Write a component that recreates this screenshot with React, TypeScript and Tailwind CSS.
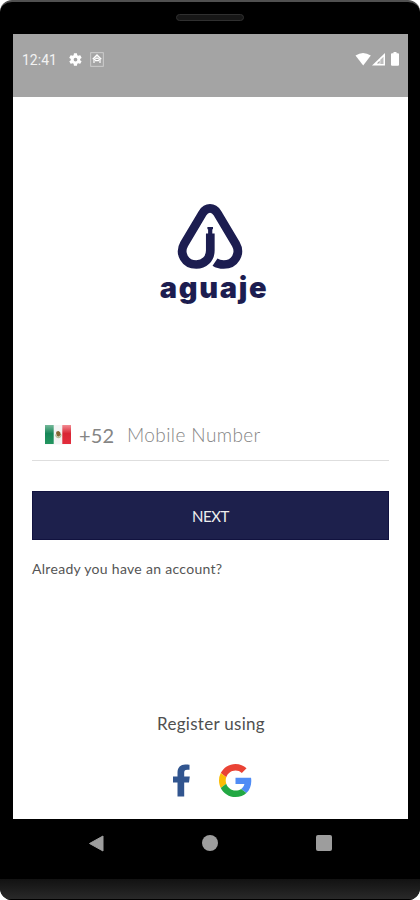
import React from 'react';

const StatusBar: React.FC = () => (
  <header className="flex h-[63px] items-start justify-between bg-[#a4a4a4] pl-[9px] pr-[7px] pt-[16px] text-white">
    <div className="flex h-[19px] items-center">
      <span className="w-[46px] whitespace-nowrap font-['Roboto',sans-serif] text-[14px] leading-none text-[#f2f2f2]">12:41</span>
      <svg className="h-[15px] w-[15px]" viewBox="0 0 24 24" fill="currentColor">
        <path d="M19.4 13a7.5 7.5 0 0 0 0-2l2.1-1.6a.5.5 0 0 0 .1-.7l-2-3.4a.5.5 0 0 0-.6-.2l-2.5 1a7.3 7.3 0 0 0-1.7-1l-.4-2.6a.5.5 0 0 0-.5-.5h-4a.5.5 0 0 0-.5.5L9 5.1a7.3 7.3 0 0 0-1.7 1l-2.5-1a.5.5 0 0 0-.6.2l-2 3.4a.5.5 0 0 0 .1.7L4.5 11a7.5 7.5 0 0 0 0 2l-2.2 1.6a.5.5 0 0 0-.1.7l2 3.4c.1.2.4.3.6.2l2.5-1a7.3 7.3 0 0 0 1.7 1l.4 2.6c0 .3.2.5.5.5h4c.3 0 .5-.2.5-.5l.4-2.6a7.3 7.3 0 0 0 1.7-1l2.5 1c.2.1.5 0 .6-.2l2-3.4a.5.5 0 0 0-.1-.7zM12 15a3 3 0 1 1 0-6 3 3 0 0 1 0 6z" />
      </svg>
      <svg className="ml-[7px] h-[15px] w-[14px]" viewBox="0 0 14 15" fill="none" stroke="currentColor">
        <rect x="0.7" y="0.7" width="12.6" height="13.6" strokeOpacity="0.5" strokeWidth="0.9" />
        <path d="M2.8 7.3 7 3l4.2 4.3" strokeWidth="1.5" />
        <path d="M4 11V7.8L7 6l3 1.8V11" strokeWidth="1.2" />
        <path d="M5 8.7h4" strokeWidth="1.2" />
      </svg>
    </div>
    <svg className="mt-[2px] h-[15px] w-[46px]" viewBox="0 0 46 15" fill="currentColor">
      <path d="M0.5 3.5Q8 -1.5 15.8 3.5L8.2 13.5z" />
      <path d="M17 13.5 30 1v12.5z" />
      <path d="M21.8 11.6 24.6 8.7v2.9z" fill="#a4a4a4" />
      <path d="M25.3 7.8 28.5 4.7V12h-3.2z" fill="#bebebe" />
      <path d="M38.5 1.2V0h3v1.2H43q1 0 1 1v10.5q0 1-1 1h-6q-1 0-1-1V2.2q0-1 1-1z" />
    </svg>
  </header>
);

const Logo: React.FC = () => (
  <div className="flex flex-col items-center text-[#1c1d50]">
    <svg className="h-[67px] w-[68px]" viewBox="25.5 8 68 67" fill="none" stroke="currentColor">
      <path
        d="M59.8 38.5V55.5C59.8 64 53.5 69.5 45.8 69.5C34.5 69.5 28.3 58.5 33.7 49L52 18.2Q55 13.4 59.5 13.4Q64 13.4 67 18.2L85.3 49C90.7 58.5 84.5 69.5 73.2 69.5Q68 69.5 64.5 67.1"
        strokeWidth="8.7"
      />
      <path d="M59.7 39.5v-6" strokeWidth="4.2" />
      <path d="M56.9 33.2h5.6" strokeWidth="2.2" />
    </svg>
    <h1 className="ml-[8px] whitespace-nowrap font-['Inter',sans-serif] text-[29px] font-black leading-[36px] tracking-[1.7px]">
      aguaje
    </h1>
  </div>
);

const MexicoFlag: React.FC = () => (
  <svg className="h-[20px] w-[26px]" viewBox="0 0 26 20">
    <defs>
      <linearGradient id="green" x2="0" y2="1">
        <stop offset="0" stopColor="#75b89a" />
        <stop offset="0.45" stopColor="#168657" />
        <stop offset="1" stopColor="#23955f" />
      </linearGradient>
      <linearGradient id="red" x2="0" y2="1">
        <stop offset="0" stopColor="#f28b92" />
        <stop offset="0.45" stopColor="#d92534" />
        <stop offset="1" stopColor="#e22d3c" />
      </linearGradient>
    </defs>
    <path d="M0 0h26v19.5H0z" fill="#f4f4f4" />
    <path d="M0 0h8.7v19H0z" fill="url(#green)" />
    <path d="M17.3 0H26v19h-8.7z" fill="url(#red)" />
    <path d="M10.5 9.5q.5 3.2 3 3.2 2.2 0 2.7-3.2" fill="none" stroke="#b5c19a" strokeWidth="1.2" />
    <path d="M11 8q0-2 2.5-2 2.3 1 2.2 3.3l-1.5 2.4-2.2-.5z" fill="#856633" />
  </svg>
);

const SocialLogins: React.FC = () => (
  <div className="mt-[27px] flex h-[34px] items-center">
    <svg className="ml-[160px] h-[33px] w-[18px]" viewBox="0 0 18 33" fill="#31558f">
      <path d="M4.5 32.5V18.5H0V12.5H4.5V8.5C4.5 3.3 7.7.5 12.2.5c2 0 3.7.1 4.3.2v5h-2.3c-2.4 0-3 1.2-3 2.9v3.9h5.6l-.8 6H11.2v14z" />
    </svg>
    <svg className="ml-[28px] h-[33px] w-[33px]" viewBox="0 0 48 48">
      <path fill="#ea4335" d="M24 9.5c3.54 0 6.71 1.22 9.21 3.6l6.85-6.85C35.9 2.38 30.47 0 24 0 14.62 0 6.51 5.38 2.56 13.22l7.98 6.19C12.43 13.72 17.74 9.5 24 9.5z" />
      <path fill="#4f8cf5" d="M46.98 24.55c0-1.57-.15-3.09-.38-4.55H24v9.02h12.94c-.58 2.96-2.26 5.48-4.78 7.18l7.73 6c4.51-4.18 7.09-10.36 7.09-17.65z" />
      <path fill="#fbbc05" d="M10.53 28.59A14.5 14.5 0 0 1 9.77 24c0-1.6.27-3.14.76-4.59l-7.98-6.19A23.9 23.9 0 0 0 0 24c0 3.88.92 7.54 2.56 10.78z" />
      <path fill="#22a843" d="M24 48c6.48 0 11.93-2.13 15.89-5.81l-7.73-6c-2.15 1.45-4.92 2.3-8.16 2.3-6.26 0-11.57-4.22-13.47-9.91l-7.98 6.19C6.51 42.62 14.62 48 24 48z" />
    </svg>
  </div>
);

const NavigationBar: React.FC = () => (
  <nav className="flex h-[48px] items-center justify-between px-[88px]">
    <svg className="h-[17px] w-[16px]" viewBox="0 0 16 17">
      <path d="M1.5 8.5 15 1v15z" fill="#9d9d9d" stroke="#9d9d9d" strokeLinejoin="round" />
    </svg>
    <span className="h-[16px] w-[16px] rounded-full bg-[#9d9d9d]" />
    <span className="h-[16px] w-[16px] rounded-[2px] bg-[#9d9d9d]" />
  </nav>
);

export default function App() {
  return (
    <div className="h-[900px] w-[420px] overflow-hidden bg-white font-['Lato',sans-serif]">
      <div className="flex h-[900px] flex-col overflow-hidden rounded-[12px] border-t-2 border-[#505050] bg-black">
        <div className="flex h-[32px] shrink-0 items-center justify-center">
          <div className="mt-[-2px] h-[7px] w-[68px] rounded-full border border-[#303030] bg-[#171717]" />
        </div>

        <main className="mx-[13px] flex h-[785px] w-[395px] shrink-0 flex-col bg-white">
          <StatusBar />

          <div className="mt-[106px] pr-[1px]">
            <Logo />
          </div>

          <div className="ml-[19px] mt-[101px] flex h-[54px] w-[357px] items-center border-b border-[#dedede] pl-[13px] pt-[2px]">
            <MexicoFlag />
            <span className="ml-[8px] w-[48px] whitespace-nowrap text-[20px] leading-[28px] tracking-[0.1px] text-[#858585]">+52</span>
            <span className="whitespace-nowrap text-[19px] font-light leading-[28px] tracking-[0.4px] text-[#858585]">Mobile Number</span>
          </div>

          <button className="ml-[19px] mt-[30px] h-[49px] w-[357px] border border-[#11123f] bg-[#1d204c] pt-px text-[15px] tracking-[-0.4px] text-[#eeeeee]">
            NEXT
          </button>
          <a className="ml-[19px] mt-[19px] whitespace-nowrap text-[14px] leading-[20px] tracking-[0.3px] text-[#555555]">
            Already you have an account?
          </a>

          <p className="ml-[144px] mt-[133px] whitespace-nowrap text-[17px] leading-[24px] tracking-[0.3px] text-[#505050]">
            Register using
          </p>
          <SocialLogins />
        </main>

        <NavigationBar />
        <div className="mt-auto h-[21px] border-b border-black bg-linear-to-b from-[#121212] to-[#292929]" />
      </div>
    </div>
  );
}
